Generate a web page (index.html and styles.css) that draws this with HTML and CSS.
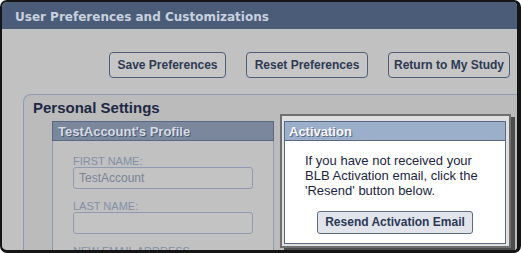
FILE: index.html
```html
<!DOCTYPE html>
<html>
<head>
<meta charset="utf-8">
<link rel="stylesheet" href="styles.css">
</head>
<body>
<div class="window">
  <div class="titlebar">User Preferences and Customizations</div>
  <div class="content">
    <div class="toolbar">
      <button class="btn btn-save">Save Preferences</button>
      <button class="btn btn-wide">Reset Preferences</button>
      <button class="btn btn-wide">Return to My Study</button>
    </div>
    <div class="settings">
      <div class="settings-title">Personal Settings</div>
      <div class="panels">
        <div class="profile">
          <div class="profile-header">TestAccount's Profile</div>
          <div class="profile-body">
            <div class="field-label">FIRST NAME:</div>
            <div class="field-input">TestAccount</div>
            <div class="field-label">LAST NAME:</div>
            <div class="field-input"></div>
            <div class="field-label">NEW EMAIL ADDRESS</div>
            <div class="field-input"></div>
          </div>
        </div>
        <div class="activation-frame">
          <div class="activation">
            <div class="activation-header">Activation</div>
            <div class="activation-body">
              <p class="activation-text">If you have not received your BLB Activation email, click the 'Resend' button below.</p>
              <div class="activation-actions">
                <button class="resend-btn">Resend Activation Email</button>
              </div>
            </div>
          </div>
        </div>
      </div>
    </div>
  </div>
</div>
</body>
</html>
```

FILE: styles.css
```css
html, body {
  margin: 0;
  padding: 0;
  width: 521px;
  height: 253px;
  overflow: hidden;
  background: #ffffff;
  font-family: "Liberation Sans", Arial, sans-serif;
}

.window {
  width: 521px;
  height: 253px;
  box-sizing: border-box;
  border: 2px solid #151515;
  border-right-width: 4px;
  border-bottom-width: 3px;
  border-radius: 7px;
  overflow: hidden;
  background: #c1c1c1;
  display: flex;
  flex-direction: column;
}

.titlebar {
  flex: none;
  height: 23px;
  padding: 4px 0 0 13px;
  line-height: 23px;
  background: #4b5c79;
  color: #c8d1de;
  font-family: "DejaVu Sans", Verdana, sans-serif;
  font-weight: bold;
  font-size: 12px;
  white-space: nowrap;
}

.content {
  flex: 1;
  min-height: 0;
  display: flex;
  flex-direction: column;
}

.toolbar {
  display: flex;
  justify-content: flex-end;
  gap: 20px;
  padding: 23px 7px 0 0;
}

.btn {
  font-family: "Liberation Sans", Arial, sans-serif;
  font-weight: bold;
  font-size: 12px;
  line-height: 14px;
  padding: 5px 0;
  border: 1px solid #4f5e79;
  border-radius: 4px;
  background: #c6c6c6;
  color: #2e3a54;
  margin: 0;
  text-align: center;
  white-space: nowrap;
}

.btn-save {
  width: 117px;
}

.btn-wide {
  width: 122px;
}

.settings {
  flex: 1;
  margin: 16px -12px 0 21px;
  border: 1px solid #8f9bb0;
  border-bottom: none;
  border-radius: 8px 8px 0 0;
  background: #bbbbbb;
  padding: 4px 0 0 9px;
}

.settings-title {
  font-weight: bold;
  font-size: 15px;
  line-height: 18px;
  color: #1e2944;
  margin: 0 0 4px 0;
}

.panels {
  display: flex;
  align-items: flex-start;
  gap: 6px;
  margin-left: 19px;
}

.profile {
  width: 222px;
  flex: none;
  box-sizing: border-box;
}

.profile-header {
  height: 16px;
  padding: 2px 0 0 5px;
  line-height: 16px;
  border: 1px solid #5b6883;
  background: #7a879c;
  color: #d6dbe3;
  font-weight: bold;
  font-size: 13px;
  text-shadow: 1px 1px 0 #4e5870;
}

.profile-body {
  background: #c1c1c1;
  border-left: 1px solid #8e99ae;
  border-right: 1px solid #8e99ae;
  padding: 14px 0 0 20px;
}

.field-label {
  font-size: 11px;
  line-height: 12px;
  color: #8290a7;
}

.field-input {
  width: 180px;
  height: 22px;
  box-sizing: border-box;
  border: 1px solid #8f9bb1;
  border-radius: 3px;
  background: #c3c3c3;
  padding: 0 5px;
  margin-bottom: 11px;
  font-size: 12px;
  line-height: 20px;
  color: #7a8495;
}

.activation-frame {
  flex: none;
  margin-top: -7px;
  border: 2px solid #6f6f6f;
  background: #e0e0e0;
  padding: 5px 3px 2px 2px;
  box-shadow: 4px 3px 0 #4d4d4d;
}

.activation {
  width: 222px;
  box-sizing: border-box;
  border: 1px solid #5a6a86;
  background: #ffffff;
}

.activation-header {
  height: 16px;
  padding: 2px 0 0 4px;
  line-height: 16px;
  background: #9cafca;
  border-bottom: 1px solid #5a6a86;
  color: #f7f9fc;
  font-weight: bold;
  font-size: 13px;
  text-shadow: 1px 1px 0 #5a667e;
}

.activation-body {
  padding: 12px 15px 9px 20px;
}

.activation-text {
  margin: 0;
  font-size: 13px;
  line-height: 15px;
  color: #1c2641;
}

.activation-actions {
  display: flex;
  justify-content: center;
  margin-top: 13px;
  margin-left: -20px;
  margin-right: -15px;
}

.resend-btn {
  font-family: "Liberation Sans", Arial, sans-serif;
  font-weight: bold;
  font-size: 12px;
  line-height: 13px;
  padding: 4px 7px;
  border: 1px solid #5d6b85;
  border-radius: 3px;
  background: #e1e5eb;
  color: #2b3856;
  margin: 0;
}
```
